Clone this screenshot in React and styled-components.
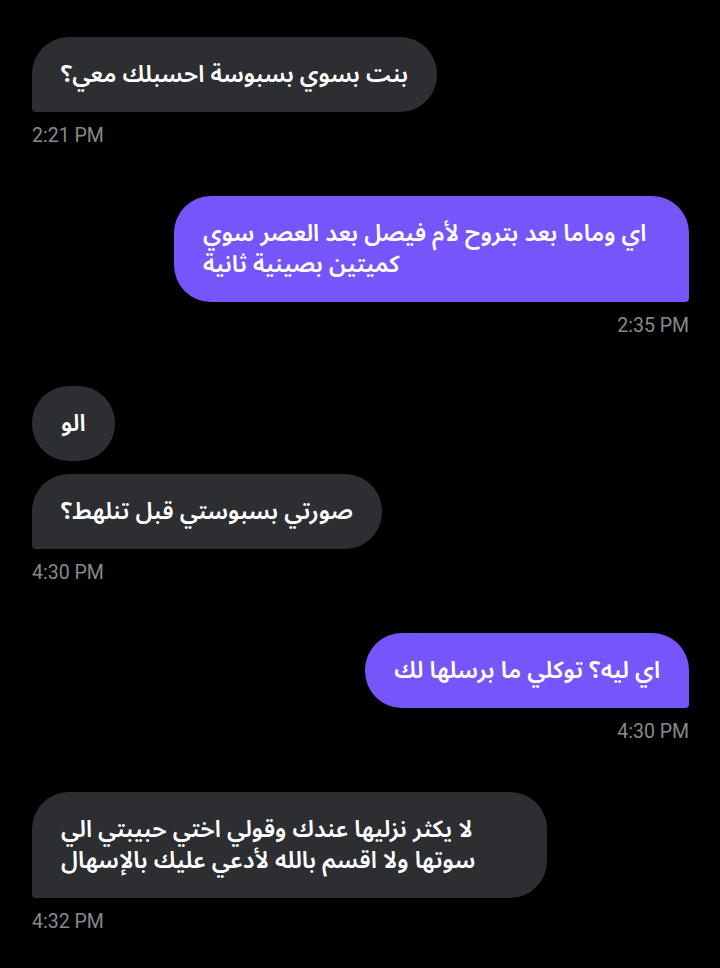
import React from "react";
import styled, { createGlobalStyle } from "styled-components";

const GlobalStyle = createGlobalStyle`
  html, body {
    margin: 0;
    padding: 0;
    background: #000;
  }
`;

const Screen = styled.div`
  width: 720px;
  min-height: 968px;
  box-sizing: border-box;
  background: #000;
  padding: 37px 31px 0 32px;
  display: flex;
  flex-direction: column;
  gap: 50px;
`;

const Group = styled.div`
  display: flex;
  flex-direction: column;
  align-items: ${(p) => (p.$mine ? "flex-end" : "flex-start")};
  gap: 13px;
`;

const Bubble = styled.div`
  max-width: 515px;
  width: ${(p) => (p.$full ? "515px" : "auto")};
  box-sizing: border-box;
  padding: 22px 29px;
  border-radius: 37px;
  ${(p) =>
    p.$mine
      ? "border-bottom-right-radius: 4px;"
      : p.$tail
      ? "border-bottom-left-radius: 4px;"
      : ""}
  background: ${(p) => (p.$mine ? "#7655fa" : "#2d2e31")};
  color: #fff;
  direction: rtl;
  text-align: left;
  font-family: "Noto Sans Arabic", "Noto Naskh Arabic", "DejaVu Sans", sans-serif;
  font-size: 23.5px;
  font-weight: 600;
  line-height: 31px;
`;

const Line = styled.span`
  display: block;
  white-space: nowrap;
`;

const Time = styled.div`
  margin-top: 1px;
  font-family: Roboto, "Liberation Sans", sans-serif;
  font-size: 19.5px;
  line-height: 20px;
  color: #88898b;
`;

const messages = [
  { mine: false, texts: [["بنت بسوي بسبوسة احسبلك معي؟"]], time: "2:21 PM" },
  {
    mine: true,
    texts: [["اي وماما بعد بتروح لأم فيصل بعد العصر سوي", "كميتين بصينية ثانية"]],
    time: "2:35 PM",
  },
  { mine: false, texts: [["الو"], ["صورتي بسبوستي قبل تنلهط؟"]], time: "4:30 PM" },
  { mine: true, texts: [["اي ليه؟ توكلي ما برسلها لك"]], time: "4:30 PM" },
  {
    mine: false,
    texts: [["لا يكثر نزليها عندك وقولي اختي حبيبتي الي", "سوتها ولا اقسم بالله لأدعي عليك بالإسهال"]],
    time: "4:32 PM",
  },
];

export default function App() {
  return (
    <>
      <GlobalStyle />
      <Screen>
        {messages.map((m, i) => (
          <Group key={i} $mine={m.mine}>
            {m.texts.map((lines, j) => (
              <Bubble
                key={j}
                $mine={m.mine}
                $tail={j === m.texts.length - 1}
                $full={lines.length > 1}
              >
                {lines.map((l, k) => (
                  <Line key={k}>{l}</Line>
                ))}
              </Bubble>
            ))}
            <Time>{m.time}</Time>
          </Group>
        ))}
      </Screen>
    </>
  );
}
